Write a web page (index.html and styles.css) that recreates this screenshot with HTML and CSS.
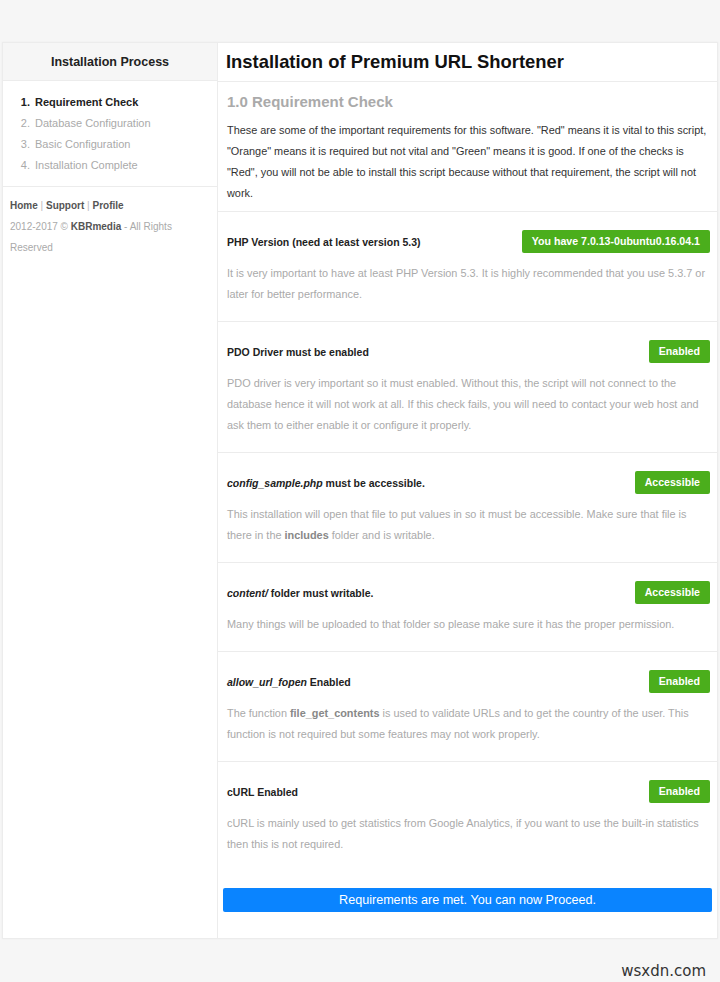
FILE: index.html
```html
<!DOCTYPE html>
<html lang="en">
<head>
<meta charset="utf-8">
<title>Installation of Premium URL Shortener</title>
<link rel="stylesheet" href="styles.css">
</head>
<body>
<div class="layout">
  <aside class="sidebar">
    <div class="side-head">Installation Process</div>
    <ol class="steps">
      <li class="current">Requirement Check</li>
      <li>Database Configuration</li>
      <li>Basic Configuration</li>
      <li>Installation Complete</li>
    </ol>
    <div class="side-foot">
      <p><b>Home</b> <span class="sep">|</span> <b>Support</b> <span class="sep">|</span> <b>Profile</b></p>
      <p>2012-2017 &copy; <b>KBRmedia</b> - All Rights Reserved</p>
    </div>
  </aside>
  <main class="content">
    <header class="main-head"><h1>Installation of Premium URL Shortener</h1></header>
    <section class="intro">
      <h2>1.0 Requirement Check</h2>
      <p>These are some of the important requirements for this software. "Red" means it is vital to this script, "Orange" means it is required but not vital and "Green" means it is good. If one of the checks is "Red", you will not be able to install this script because without that requirement, the script will not work.</p>
    </section>
    <div class="check">
      <div class="check-head"><span class="check-title">PHP Version (need at least version 5.3)</span><span class="badge">You have 7.0.13-0ubuntu0.16.04.1</span></div>
      <p>It is very important to have at least PHP Version 5.3. It is highly recommended that you use 5.3.7 or later for better performance.</p>
    </div>
    <div class="check">
      <div class="check-head"><span class="check-title">PDO Driver must be enabled</span><span class="badge">Enabled</span></div>
      <p>PDO driver is very important so it must enabled. Without this, the script will not connect to the database hence it will not work at all. If this check fails, you will need to contact your web host and ask them to either enable it or configure it properly.</p>
    </div>
    <div class="check">
      <div class="check-head"><span class="check-title"><i>config_sample.php</i> must be accessible.</span><span class="badge">Accessible</span></div>
      <p>This installation will open that file to put values in so it must be accessible. Make sure that file is there in the <b>includes</b> folder and is writable.</p>
    </div>
    <div class="check">
      <div class="check-head"><span class="check-title"><i>content/</i> folder must writable.</span><span class="badge">Accessible</span></div>
      <p>Many things will be uploaded to that folder so please make sure it has the proper permission.</p>
    </div>
    <div class="check">
      <div class="check-head"><span class="check-title"><i>allow_url_fopen</i> Enabled</span><span class="badge">Enabled</span></div>
      <p>The function <b>file_get_contents</b> is used to validate URLs and to get the country of the user. This function is not required but some features may not work properly.</p>
    </div>
    <div class="check last">
      <div class="check-head"><span class="check-title">cURL Enabled</span><span class="badge">Enabled</span></div>
      <p>cURL is mainly used to get statistics from Google Analytics, if you want to use the built-in statistics then this is not required.</p>
    </div>
    <div class="actions"><a class="proceed" href="#">Requirements are met. You can now Proceed.</a></div>
  </main>
</div>
<div class="watermark">wsxdn.com</div>
</body>
</html>
```

FILE: styles.css
```css
* { box-sizing: border-box; }
html, body { margin: 0; padding: 0; }
body {
  background: #f6f6f6;
  font-family: "Liberation Sans", Arial, Helvetica, sans-serif;
  color: #333;
  padding-top: 42px;
}
.layout {
  margin: 0 2px;
  display: grid;
  grid-template-columns: 215px 1fr;
  background: #fff;
  border: 1px solid #ececec;
  box-shadow: 0 0 2px rgba(0,0,0,0.04);
}
.sidebar {
  border-right: 1px solid #ececec;
}
.side-head {
  height: 38px;
  line-height: 38px;
  background: #f6f6f6;
  border-bottom: 1px solid #ececec;
  text-align: center;
  font-weight: bold;
  font-size: 12.5px;
  color: #222;
}
.steps {
  margin: 0;
  padding: 11px 0 10px 30px;
  font-size: 11px;
  line-height: 21px;
  color: #aaa;
  border-bottom: 1px solid #ececec;
}
.steps li { padding-left: 2px; }
.steps li.current { color: #222; font-weight: bold; }
.side-foot {
  padding: 8px 8px 0 7px;
  font-size: 10px;
  line-height: 21px;
  color: #aaa;
}
.side-foot p { margin: 0; }
.side-foot b { color: #555; }
.side-foot .sep { color: #bbb; }
.content { padding: 0 7px 26px 9px; min-width: 0; }
.main-head {
  height: 39px;
  border-bottom: 1px solid #ececec;
  margin: 0 -7px 0 -9px;
  padding: 0 8px;
  display: flex;
  align-items: center;
}
.main-head h1 {
  margin: 0;
  font-size: 18.4px;
  color: #111;
}
.intro {
  margin: 0 -7px 0 -9px;
  padding: 10px 7px 7px 9px;
  border-bottom: 1px solid #ececec;
}
.intro h2 {
  margin: 0 0 8px;
  font-size: 15px;
  line-height: 20px;
  color: #aaa;
}
.intro p {
  margin: 0;
  font-size: 10.9px;
  line-height: 21px;
  color: #333;
}
.check {
  margin: 0 -7px 0 -9px;
  padding: 18px 7px 16px 9px;
  border-bottom: 1px solid #ececec;
}
.check.last { border-bottom: none; }
.check-head {
  display: flex;
  justify-content: space-between;
  align-items: center;
  margin-bottom: 10px;
}
.check-title { font-size: 10.5px; font-weight: bold; color: #222; }
.badge {
  background: #4bae1c;
  color: #fff;
  font-weight: bold;
  font-size: 10.6px;
  height: 23px;
  line-height: 23px;
  padding: 0 10px;
  border-radius: 2px;
}
.check p {
  margin: 0;
  font-size: 10.9px;
  line-height: 21px;
  color: #aaa;
}
.check p b { color: #888; }
.actions { padding-top: 17px; margin: 0 -2px 0 -4px; }
.proceed {
  display: block;
  height: 24px;
  line-height: 24px;
  background: #0a84ff;
  color: #fff;
  text-align: center;
  text-decoration: none;
  font-size: 12.6px;
  border-radius: 2px;
}
.watermark {
  text-align: right;
  padding: 23px 14px 0 0;
  font-family: "DejaVu Sans", sans-serif;
  font-size: 15px;
  line-height: 18px;
  color: #333;
}
```
